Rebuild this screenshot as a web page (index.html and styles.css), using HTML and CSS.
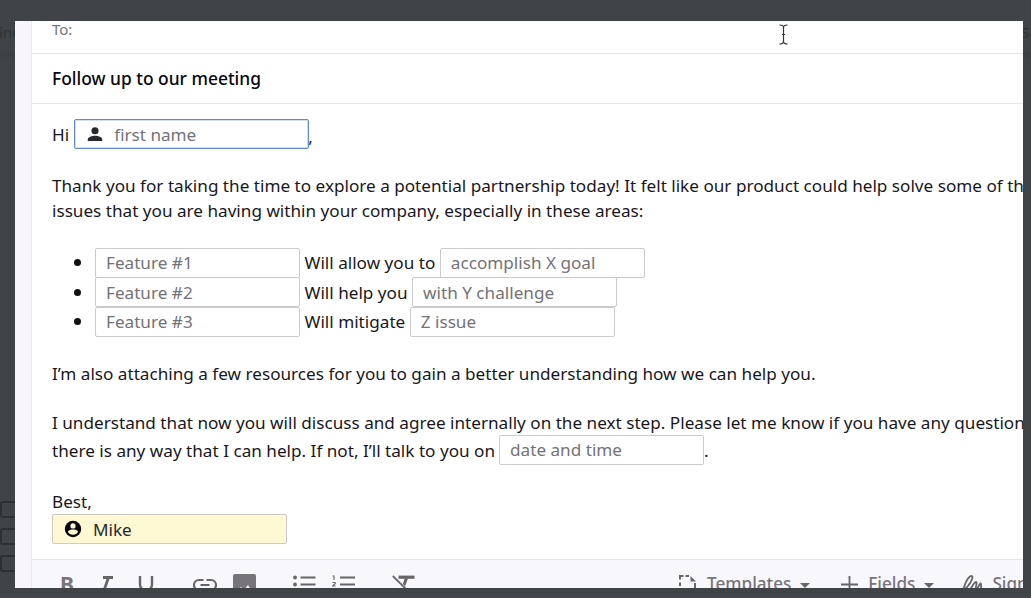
FILE: index.html
```html
<!DOCTYPE html>
<html lang="en">
<head>
<meta charset="utf-8">
<title>Compose</title>
<link rel="stylesheet" href="styles.css">
</head>
<body>
<div class="screen">
  <div class="backdrop">
    <span class="ghost ghost-left">ine</span>
    <span class="ghost ghost-right">Sa</span>
    <div class="checks"><i></i><i></i><i></i></div>
  </div>
  <main class="window">
    <div class="gutter"></div>
    <section class="composer">
      <div class="row to">To:</div>
      <div class="row subject"><span>Follow up to our meeting</span></div>
      <div class="message">
        <div class="line greeting"><span>Hi</span>
          <div class="field person focus">
            <svg class="person-icon" viewBox="0 0 16 16"><circle cx="8" cy="4" r="3.8"/><path d="M.3 15v-1.6C.3 10.6 5 9.4 8 9.4s7.700 1.200 7.700 4V15z"/></svg>
            <span>first name</span>
          </div><span class="comma">,</span>
        </div>
        <div class="intro">
          <div class="line text"><span>Thank you for taking the time to explore a potential partnership today! It felt like our product could help solve some of th</span></div>
          <div class="line text"><span>issues that you are having within your company, especially in these areas:</span></div>
        </div>
        <ul class="features">
          <li><div class="field">Feature #1</div><span>Will allow you to</span><div class="field">accomplish X goal</div></li>
          <li><div class="field">Feature #2</div><span>Will help you</span><div class="field">with Y challenge</div></li>
          <li><div class="field">Feature #3</div><span>Will mitigate</span><div class="field">Z issue</div></li>
        </ul>
        <div class="line text resources"><span>I’m also attaching a few resources for you to gain a better understanding how we can help you.</span></div>
        <div class="line text"><span>I understand that now you will discuss and agree internally on the next step. Please let me know if you have any question</span></div>
        <div class="line schedule"><span>there is any way that I can help. If not, I’ll talk to you on</span><div class="field">date and time</div><span class="stop">.</span></div>
        <div class="line text best"><span>Best,</span></div>
        <div class="field person signer">
          <svg class="account-icon" viewBox="0 0 18 18"><circle cx="9" cy="9" r="8.200"/><g fill="#fef9d2"><circle cx="9" cy="5.900" r="2.600"/><path d="M3.900 11.800c.3-1.700 3.200-2.300 5.100-2.300s4.800.6 5.100 2.300c-1 1.800-2.900 2.900-5.100 2.900s-4.100-1.100-5.100-2.900z"/></g></svg>
          <span>Mike</span>
        </div>
      </div>
      <div class="toolbar">
        <div class="tools">
          <b class="bold">B</b>
          <svg class="italic" width="14" height="16" viewBox="0 0 14 16"><path d="M3 1.500h10M1 14.500h7M8.500 1.500 4 14.500" stroke-width="2.800"/></svg>
          <svg class="under" width="16" height="20" viewBox="0 0 16 20"><path d="M2 0v8.500a6 6 0 0 0 12 0V0" stroke-width="2.400"/></svg>
          <svg class="link" width="26" height="14" viewBox="0 0 26 14"><path d="M11.500 2H7a5 5 0 0 0 0 10h4.500M14.500 2H19a5 5 0 0 1 0 10h-4.500M8.500 7h9" stroke-width="2.200"/></svg>
          <svg class="image" width="23" height="22" viewBox="0 0 23 22"><rect width="23" height="22" rx="2" fill="#77747a" stroke="none"/><path d="m3 19 5-6 3 3 4-5 5 8z" fill="#f8f7fb" stroke="none"/></svg>
          <svg class="bullets" width="23" height="20" viewBox="0 0 23 20"><path d="M7.500 2.500H22.500M7.500 9.500H22.500M7.500 16.500H22.500" stroke-width="2"/><g fill="#68656b" stroke="none"><circle cx="2" cy="2.500" r="1.900"/><circle cx="2" cy="9.500" r="1.900"/></g></svg>
          <svg class="numbers" width="23" height="20" viewBox="0 0 23 20"><path d="M8 2.500h15M8 9.500h15M8 16.500h15" stroke-width="2"/><path d="M.5 1H2v4M.5 7.500h2.700v1.200L.5 11h3" stroke-width="1.100"/></svg>
          <svg class="clear" width="23" height="20" viewBox="0 0 23 20"><path d="M6.500 2.200H22.500" stroke-width="3.200"/><path d="m14.500 3-5 14" stroke-width="3"/><path d="M1 2 17 18" stroke="#f8f7fb" stroke-width="4"/><path d="M.8 1 17 17" stroke-width="1.800"/></svg>
        </div>
        <div class="actions">
          <svg class="template" width="18" height="20" viewBox="0 0 18 20"><path d="M1 4.500V1h3.500M6.500 1H10M1 7.500V11M1 14v4h15V8" stroke-width="2"/><path d="M11.500 1v5.500H17z" fill="#68656b" stroke="none"/></svg>
          <span>Templates</span><i class="caret"></i>
          <svg class="plus" width="17" height="17" viewBox="0 0 17 17"><path d="M8.500 0v17M0 8.500h17" stroke-width="1.800"/></svg>
          <span>Fields</span><i class="caret"></i>
          <svg class="signature" width="20" height="22" viewBox="0 0 20 22"><path d="M1 15C6 13 13 1.500 9.500 1 6 .8 1 12 1.500 17s5 0 7.500-4c2-3 3.500-6 5-6 2 0-1.500 7 .5 7s2.500-5.500 4-5.500c1.200 0 0 4 1 6" stroke-width="1.800"/></svg>
          <span>Sign</span>
        </div>
      </div>
    </section>
  </main>
  <svg class="cursor" width="9" height="21" viewBox="0 0 9 21"><path d="M.5 1c2.500 0 4 .6 4 2.500v14c0 1.900-1.500 2.500-4 2.500M8.500 1c-2.500 0-4 .6-4 2.500v14c0 1.900 1.500 2.500 4 2.500M3 10.500h3"/></svg>
</div>
</body>
</html>
```
FILE: styles.css
```css
* { box-sizing: border-box; }
body { margin: 0; font-family: "Noto Sans", sans-serif; font-size: 17.150px; color: #19171d; }
svg { display: block; flex: none; }
.screen { position: relative; width: 1031px; height: 598px; padding: 21px 8px 10px 15px; background: #404447; overflow: hidden; }

/* Dimmed page behind the window */
.backdrop { position: absolute; inset: 0; border-bottom: 1px solid #51474b; background: linear-gradient(#404447 0 8px, #3e4245 9px, #404447 10px 51px, #3b3f42 54px, #404447 60px); }
.ghost { position: absolute; top: 22px; font-size: 15px; line-height: 20px; color: #2f3336; }
.ghost-left { left: -1px; }
.ghost-right { left: 1021px; }
.checks { position: absolute; top: 501px; left: 0; display: flex; flex-direction: column; gap: 10px; }
.checks i { width: 30px; height: 17px; border: 2px solid #2d3033; border-radius: 3px; }

.window { position: relative; display: flex; height: 567px; background: #fff; overflow: hidden; }
.gutter { flex: none; width: 17px; background: #f8f6fb; border-right: 1px solid #eae8ec; }
.composer { flex: none; width: 1050px; display: flex; flex-direction: column; }
.row { flex: none; display: flex; align-items: center; padding-left: 20px; border-bottom: 1px solid #e6e5e8; }
.to { height: 33px; padding-bottom: 16px; font-size: 15px; color: #77757a; }
.subject { height: 50px; padding-bottom: 2px; font-size: 17.400px; font-weight: 500; color: #08060c; }

.message { flex: none; height: 455px; padding: 15px 0 0 20px; white-space: nowrap; }
.line { display: flex; align-items: center; }
.field { flex: none; display: flex; align-items: center; width: 205px; height: 30px; padding-left: 10px; border: 1px solid #cbcace; border-radius: 2px; color: #747277; background: #fff; }
.greeting { height: 30px; gap: 5px; }
.person { width: 235px; }
.focus { border-color: #6488d0; box-shadow: inset 0 0 0 1px #d3def4; }
.person-icon { width: 16px; height: 15px; margin: 0 11px 0 2px; fill: #29272d; }
.comma { align-self: flex-end; margin: 0 0 1px -6px; color: #201a55; }
.text { height: 25px; }
.intro { margin-top: 24px; }
.features { margin: 25px 0 0; padding: 0; list-style: none; }
.features li { display: flex; align-items: center; gap: 4.500px; height: 29.500px; }
.features li::before { content: ""; width: 7px; height: 7px; margin: 0 9.500px 0 22px; border-radius: 50%; background: #111; }
.resources { margin: 24px 0; }
.schedule { height: 30px; gap: 4px; }
.schedule span { padding-top: 1px; }
.stop { margin-left: -4px; }
.best { margin-top: 24px; }
.signer { background: #fef9d2; border-color: #d0c9c4; padding: 1px 0 0 11px; color: #29272d; }
.account-icon { width: 18px; height: 18px; margin-right: 11px; fill: #08070b; }

.toolbar { flex: none; display: flex; height: 50px; padding-left: 28px; background: #f8f7fb; border-top: 1px solid #e5e4e8; color: #77747a; }
.toolbar svg { fill: none; stroke: #68656b; }
.tools { display: flex; align-items: flex-start; width: 619px; padding-top: 16px; }
.bold { width: 16px; margin-top: -4px; font-size: 21px; line-height: 24px; }
.italic { margin-left: 24px; }
.under { margin-left: 24px; }
.link { margin: 2px 0 0 38px; }
.image { margin: -2px 0 0 15px; }
.bullets { margin: -1px 0 0 37px; }
.numbers { margin: -1px 0 0 16px; }
.clear { margin: -1px 0 0 37px; }
.actions { display: flex; align-items: flex-start; padding-top: 15px; font-weight: 500; line-height: 20px; }
.actions span { margin-top: -1px; }
.template { margin-right: 10px; }
.caret { margin: 8px 0 0 9px; border: 5.500px solid transparent; border-top-color: #68656b; border-bottom: 0; }
.plus { margin: 1px 10px 0 31px; }
.signature { margin: 0 10px 0 28px; }

.cursor { position: absolute; left: 779px; top: 24px; fill: none; stroke: #333; stroke-width: 1.200; }
```
